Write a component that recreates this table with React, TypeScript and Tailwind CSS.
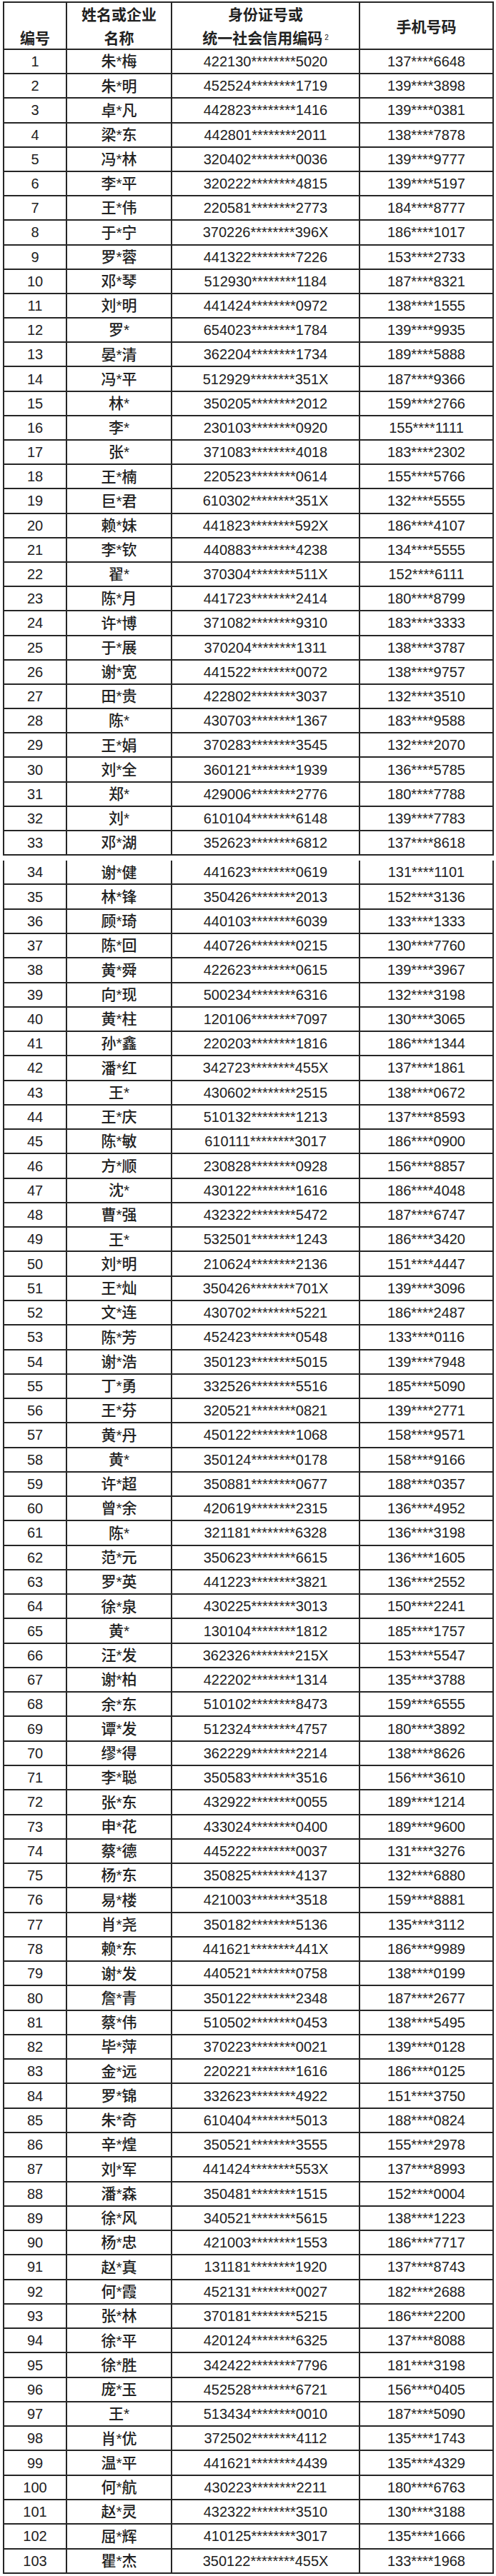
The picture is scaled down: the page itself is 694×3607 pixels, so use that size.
const RAW = `朱*梅|422130|5020|137|6648
朱*明|452524|1719|139|3898
卓*凡|442823|1416|139|0381
梁*东|442801|2011|138|7878
冯*林|320402|0036|139|9777
李*平|320222|4815|139|5197
王*伟|220581|2773|184|8777
于*宁|370226|396X|186|1017
罗*蓉|441322|7226|153|2733
邓*琴|512930|1184|187|8321
刘*明|441424|0972|138|1555
罗*|654023|1784|139|9935
晏*清|362204|1734|189|5888
冯*平|512929|351X|187|9366
林*|350205|2012|159|2766
李*|230103|0920|155|1111
张*|371083|4018|183|2302
王*楠|220523|0614|155|5766
巨*君|610302|351X|132|5555
赖*妹|441823|592X|186|4107
李*钦|440883|4238|134|5555
翟*|370304|511X|152|6111
陈*月|441723|2414|180|8799
许*博|371082|9310|183|3333
于*展|370204|1311|138|3787
谢*宽|441522|0072|138|9757
田*贵|422802|3037|132|3510
陈*|430703|1367|183|9588
王*娟|370283|3545|132|2070
刘*全|360121|1939|136|5785
郑*|429006|2776|180|7788
刘*|610104|6148|139|7783
邓*湖|352623|6812|137|8618
谢*健|441623|0619|131|1101
林*锋|350426|2013|152|3136
顾*琦|440103|6039|133|1333
陈*回|440726|0215|130|7760
黄*舜|422623|0615|139|3967
向*现|500234|6316|132|3198
黄*柱|120106|7097|130|3065
孙*鑫|220203|1816|186|1344
潘*红|342723|455X|137|1861
王*|430602|2515|138|0672
王*庆|510132|1213|137|8593
陈*敏|610111|3017|186|0900
方*顺|230828|0928|156|8857
沈*|430122|1616|186|4048
曹*强|432322|5472|187|6747
王*|532501|1243|186|3420
刘*明|210624|2136|151|4447
王*灿|350426|701X|139|3096
文*连|430702|5221|186|2487
陈*芳|452423|0548|133|0116
谢*浩|350123|5015|139|7948
丁*勇|332526|5516|185|5090
王*芬|320521|0821|139|2771
黄*丹|450122|1068|158|9571
黄*|350124|0178|158|9166
许*超|350881|0677|188|0357
曾*余|420619|2315|136|4952
陈*|321181|6328|136|3198
范*元|350623|6615|136|1605
罗*英|441223|3821|136|2552
徐*泉|430225|3013|150|2241
黄*|130104|1812|185|1757
汪*发|362326|215X|153|5547
谢*柏|422202|1314|135|3788
余*东|510102|8473|159|6555
谭*发|512324|4757|180|3892
缪*得|362229|2214|138|8626
李*聪|350583|3516|156|3610
张*东|432922|0055|189|1214
申*花|433024|0400|189|9600
蔡*德|445222|0037|131|3276
杨*东|350825|4137|132|6880
易*楼|421003|3518|159|8881
肖*尧|350182|5136|135|3112
赖*东|441621|441X|186|9989
谢*发|440521|0758|138|0199
詹*青|350122|2348|187|2677
蔡*伟|510502|0453|138|5495
毕*萍|370223|0021|139|0128
金*远|220221|1616|186|0125
罗*锦|332623|4922|151|3750
朱*奇|610404|5013|188|0824
辛*煌|350521|3555|155|2978
刘*军|441424|553X|137|8993
潘*森|350481|1515|152|0004
徐*风|340521|5615|138|1223
杨*忠|421003|1553|186|7717
赵*真|131181|1920|137|8743
何*霞|452131|0027|182|2688
张*林|370181|5215|186|2200
徐*平|420124|6325|137|8088
徐*胜|342422|7796|181|3198
庞*玉|452528|6721|156|0405
王*|513434|0010|187|5090
肖*优|372502|4112|135|1743
温*平|441621|4439|135|4329
何*航|430223|2211|180|6763
赵*灵|432322|3510|130|3188
屈*辉|410125|3017|135|1666
瞿*杰|350122|455X|133|1968`

interface Person {
  no: number
  name: string
  id: string
  phone: string
}

const people: Person[] = RAW.split('\n').map((line, i) => {
  const [name, idHead, idTail, phoneHead, phoneTail] = line.split('|')
  return {
    no: i + 1,
    name,
    id: `${idHead}********${idTail}`,
    phone: `${phoneHead}****${phoneTail}`,
  }
})

const COLS = 'grid grid-cols-[88px_147px_263px_187px]'
const CELL = 'flex items-center justify-center border-r-2 border-[#262626]'

function Row({ person, tall }: { person: Person; tall: boolean }) {
  return (
    <div className={`${COLS} border-b-2 border-[#262626] ${tall ? 'h-[34.27px]' : 'h-[34.2px]'}`}>
      <div className={`${CELL} text-[20px]`}>{person.no}</div>
      <div className={`${CELL} text-[21px] font-medium`}>{person.name}</div>
      <div className={`${CELL} text-[20px]`}>{person.id}</div>
      <div className={`${CELL} text-[20px]`}>{person.phone}</div>
    </div>
  )
}

export default function App() {
  const first = people.slice(0, 33)
  const rest = people.slice(33)

  return (
    <div className="w-[694px] bg-white pt-[2px] pb-[2px] font-['Liberation_Sans','Noto_Sans_CJK_SC',sans-serif] text-[#222]">
      <div className="ml-[4px] w-[687px] border-t-2 border-l-2 border-[#262626]">
        <div className={`${COLS} h-[66px] border-b-2 border-[#262626] text-[21px] font-bold leading-[33px]`}>
          <div className="flex items-end justify-center border-r-2 border-[#262626]">编号</div>
          <div className="flex flex-col items-center justify-center border-r-2 border-[#262626]">
            <span>姓名或企业</span>
            <span>名称</span>
          </div>
          <div className="flex flex-col items-center justify-center border-r-2 border-[#262626]">
            <span>身份证号或</span>
            <span>
              统一社会信用编码
              <sup className="ml-[3px] text-[10px] font-normal">2</sup>
            </span>
          </div>
          <div className="flex items-center justify-center border-r-2 border-[#262626]">手机号码</div>
        </div>
        {first.map((p) => (
          <Row key={p.no} person={p} tall={false} />
        ))}
      </div>

      <div className="mt-[7px] ml-[4px] w-[687px] border-l-2 border-[#262626]">
        {rest.map((p) => (
          <Row key={p.no} person={p} tall />
        ))}
      </div>
    </div>
  )
}
